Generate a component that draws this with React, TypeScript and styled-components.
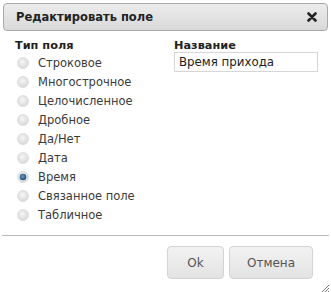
import React, { useState } from "react";
import styled, { createGlobalStyle } from "styled-components";

const GlobalStyle = createGlobalStyle`
  html, body {
    margin: 0;
    padding: 0;
    background: #fff;
  }
  body {
    font-family: "DejaVu Sans", Verdana, sans-serif;
  }
`;

const Dialog = styled.div`
  width: 331px;
  height: 292px;
  box-sizing: border-box;
  padding: 3px 3px 0 3px;
  display: flex;
  flex-direction: column;
  background: #fff;
  position: relative;
`;

const TitleBar = styled.div`
  height: 28px;
  box-sizing: border-box;
  border: 1px solid #aaaaaa;
  border-radius: 4px;
  background: linear-gradient(#ececec, #d9d9d9);
  display: flex;
  align-items: center;
  justify-content: space-between;
  padding: 0 9px 0 12px;
`;

const Title = styled.span`
  font-weight: bold;
  font-size: 11.5px;
  color: #222;
`;

const CloseButton = styled.button`
  border: 0;
  background: none;
  padding: 0;
  width: 12px;
  height: 12px;
  display: flex;
  align-items: center;
  justify-content: center;
  cursor: pointer;
`;

const Content = styled.div`
  flex: 1;
  display: flex;
  padding: 8px 0 0 12px;
`;

const Column = styled.div<{ $width: number }>`
  width: ${(p) => p.$width}px;
  display: flex;
  flex-direction: column;
`;

const Label = styled.div`
  font-size: 11.3px;
  font-weight: bold;
  color: #222;
  line-height: 14px;
`;

const RadioRow = styled.label`
  height: 19px;
  display: flex;
  align-items: center;
  gap: 9px;
  padding-left: 2px;
  font-size: 11.5px;
  color: #3a3a3a;
  cursor: pointer;
`;

const NameInput = styled.input`
  width: 144px;
  height: 20px;
  box-sizing: border-box;
  margin-top: -1px;
  border: 1px solid #d6d6d6;
  padding: 0 4px;
  font-family: "DejaVu Sans", Verdana, sans-serif;
  font-size: 11.8px;
  color: #222;
  outline: none;
`;

const ButtonPane = styled.div`
  height: 57px;
  box-sizing: border-box;
  margin: 0 -1px;
  border-top: 1px solid #b8b8b8;
  display: flex;
  justify-content: flex-end;
  align-items: flex-start;
  gap: 5px;
  padding: 10px 16px 0 0;
`;

const Button = styled.button<{ $width: number }>`
  width: ${(p) => p.$width}px;
  height: 33px;
  border: 1px solid #d3d3d3;
  border-radius: 4px;
  background: linear-gradient(#f2f2f2, #e3e3e3);
  color: #555;
  font-family: "DejaVu Sans", Verdana, sans-serif;
  font-size: 12px;
  cursor: pointer;
`;

const ResizeHandle = styled.div`
  position: absolute;
  right: 1px;
  bottom: 1px;
  width: 12px;
  height: 12px;
`;

const RadioDot = ({ checked }: { checked: boolean }) => (
  <svg width="12" height="12" viewBox="0 0 12 12">
    <defs>
      <radialGradient id="rg-off" cx="45%" cy="40%" r="60%">
        <stop offset="0%" stopColor="#f6f6f6" />
        <stop offset="100%" stopColor="#d8d8d8" />
      </radialGradient>
      <radialGradient id="rg-on" cx="45%" cy="40%" r="60%">
        <stop offset="0%" stopColor="#6f9cc4" />
        <stop offset="100%" stopColor="#1c4c78" />
      </radialGradient>
    </defs>
    <circle cx="6" cy="6" r="5.5" fill="url(#rg-off)" stroke="#dadada" strokeWidth="0.8" />
    {checked && <circle cx="6" cy="6" r="3.3" fill="url(#rg-on)" />}
  </svg>
);

const types = [
  "Строковое",
  "Многострочное",
  "Целочисленное",
  "Дробное",
  "Да/Нет",
  "Дата",
  "Время",
  "Связанное поле",
  "Табличное",
];

export default function App() {
  const [selected, setSelected] = useState("Время");
  const [name, setName] = useState("Время прихода");

  return (
    <>
      <GlobalStyle />
      <Dialog>
        <TitleBar>
          <Title>Редактировать поле</Title>
          <CloseButton>
            <svg width="10" height="10" viewBox="0 0 10 10">
              <path d="M1.5 1.5 L8.5 8.5 M8.5 1.5 L1.5 8.5" stroke="#222" strokeWidth="2.6" strokeLinecap="round" />
            </svg>
          </CloseButton>
        </TitleBar>
        <Content>
          <Column $width={159}>
            <Label>Тип поля</Label>
            {types.map((t) => (
              <RadioRow key={t} onClick={() => setSelected(t)}>
                <RadioDot checked={selected === t} />
                {t}
              </RadioRow>
            ))}
          </Column>
          <Column $width={150}>
            <Label>Название</Label>
            <NameInput value={name} onChange={(e) => setName(e.target.value)} />
          </Column>
        </Content>
        <ButtonPane>
          <Button $width={57}>Ok</Button>
          <Button $width={84}>Отмена</Button>
        </ButtonPane>
        <ResizeHandle>
          <svg width="12" height="12" viewBox="0 0 12 12">
            <path d="M11 3 L3 11 M11 6 L6 11 M11 9 L9 11" stroke="#777" strokeWidth="1" />
          </svg>
        </ResizeHandle>
      </Dialog>
    </>
  );
}
